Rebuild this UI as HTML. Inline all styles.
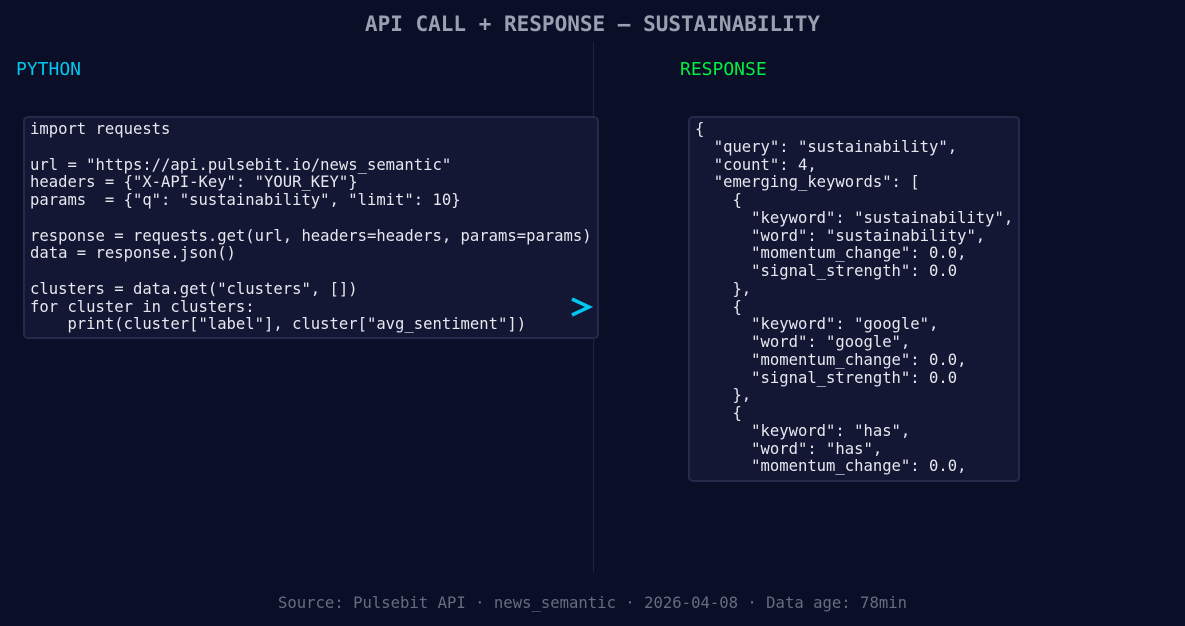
<!DOCTYPE html>
<html><head><meta charset="utf-8"><style>
html,body{margin:0;padding:0;}
body{width:1185px;height:626px;background:#0a0e27;position:relative;overflow:hidden;font-family:"DejaVu Sans Mono","Liberation Mono",monospace;}
.t{position:absolute;white-space:pre;}
.title{left:0;width:1185px;text-align:center;top:12px;font-size:21px;font-weight:bold;color:#9aa0b0;}
.lab{font-size:18px;top:59px;}
.box{position:absolute;background:#131733;border:2px solid #252a4a;border-radius:5px;box-sizing:border-box;}
pre{margin:0;position:absolute;font-family:"DejaVu Sans Mono",monospace;font-size:15.55px;line-height:17.75px;color:#e6e8f0;}
.foot{left:0;width:1185px;text-align:center;top:594px;font-size:15.6px;color:#676c80;}
</style></head><body>
<div class="t title">API CALL + RESPONSE — SUSTAINABILITY</div>
<div class="t lab" style="left:16px;color:#00c8f0">PYTHON</div>
<div class="t lab" style="left:680px;color:#00f040">RESPONSE</div>
<div style="position:absolute;left:593px;top:42px;width:1px;height:530px;background:#1e2340"></div>
<div class="box" style="left:23px;top:116px;width:576px;height:223px"></div>
<div class="box" style="left:688px;top:116px;width:332px;height:366px"></div>
<pre style="left:30px;top:121px">import requests

url = "https://api.pulsebit.io/news_semantic"
headers = {"X-API-Key": "YOUR_KEY"}
params  = {"q": "sustainability", "limit": 10}

response = requests.get(url, headers=headers, params=params)
data = response.json()

clusters = data.get("clusters", [])
for cluster in clusters:
    print(cluster["label"], cluster["avg_sentiment"])</pre>
<pre style="left:695px;top:121px">{
  "query": "sustainability",
  "count": 4,
  "emerging_keywords": [
    {
      "keyword": "sustainability",
      "word": "sustainability",
      "momentum_change": 0.0,
      "signal_strength": 0.0
    },
    {
      "keyword": "google",
      "word": "google",
      "momentum_change": 0.0,
      "signal_strength": 0.0
    },
    {
      "keyword": "has",
      "word": "has",
      "momentum_change": 0.0,</pre>
<svg style="position:absolute;left:568px;top:296px" width="26" height="24"><polyline points="4,3 21,11 4,19" fill="none" stroke="#00c8f0" stroke-width="3.5" stroke-linejoin="miter"/></svg>
<div class="t foot">Source: Pulsebit API · news_semantic · 2026-04-08 · Data age: 78min</div>
</body></html>
